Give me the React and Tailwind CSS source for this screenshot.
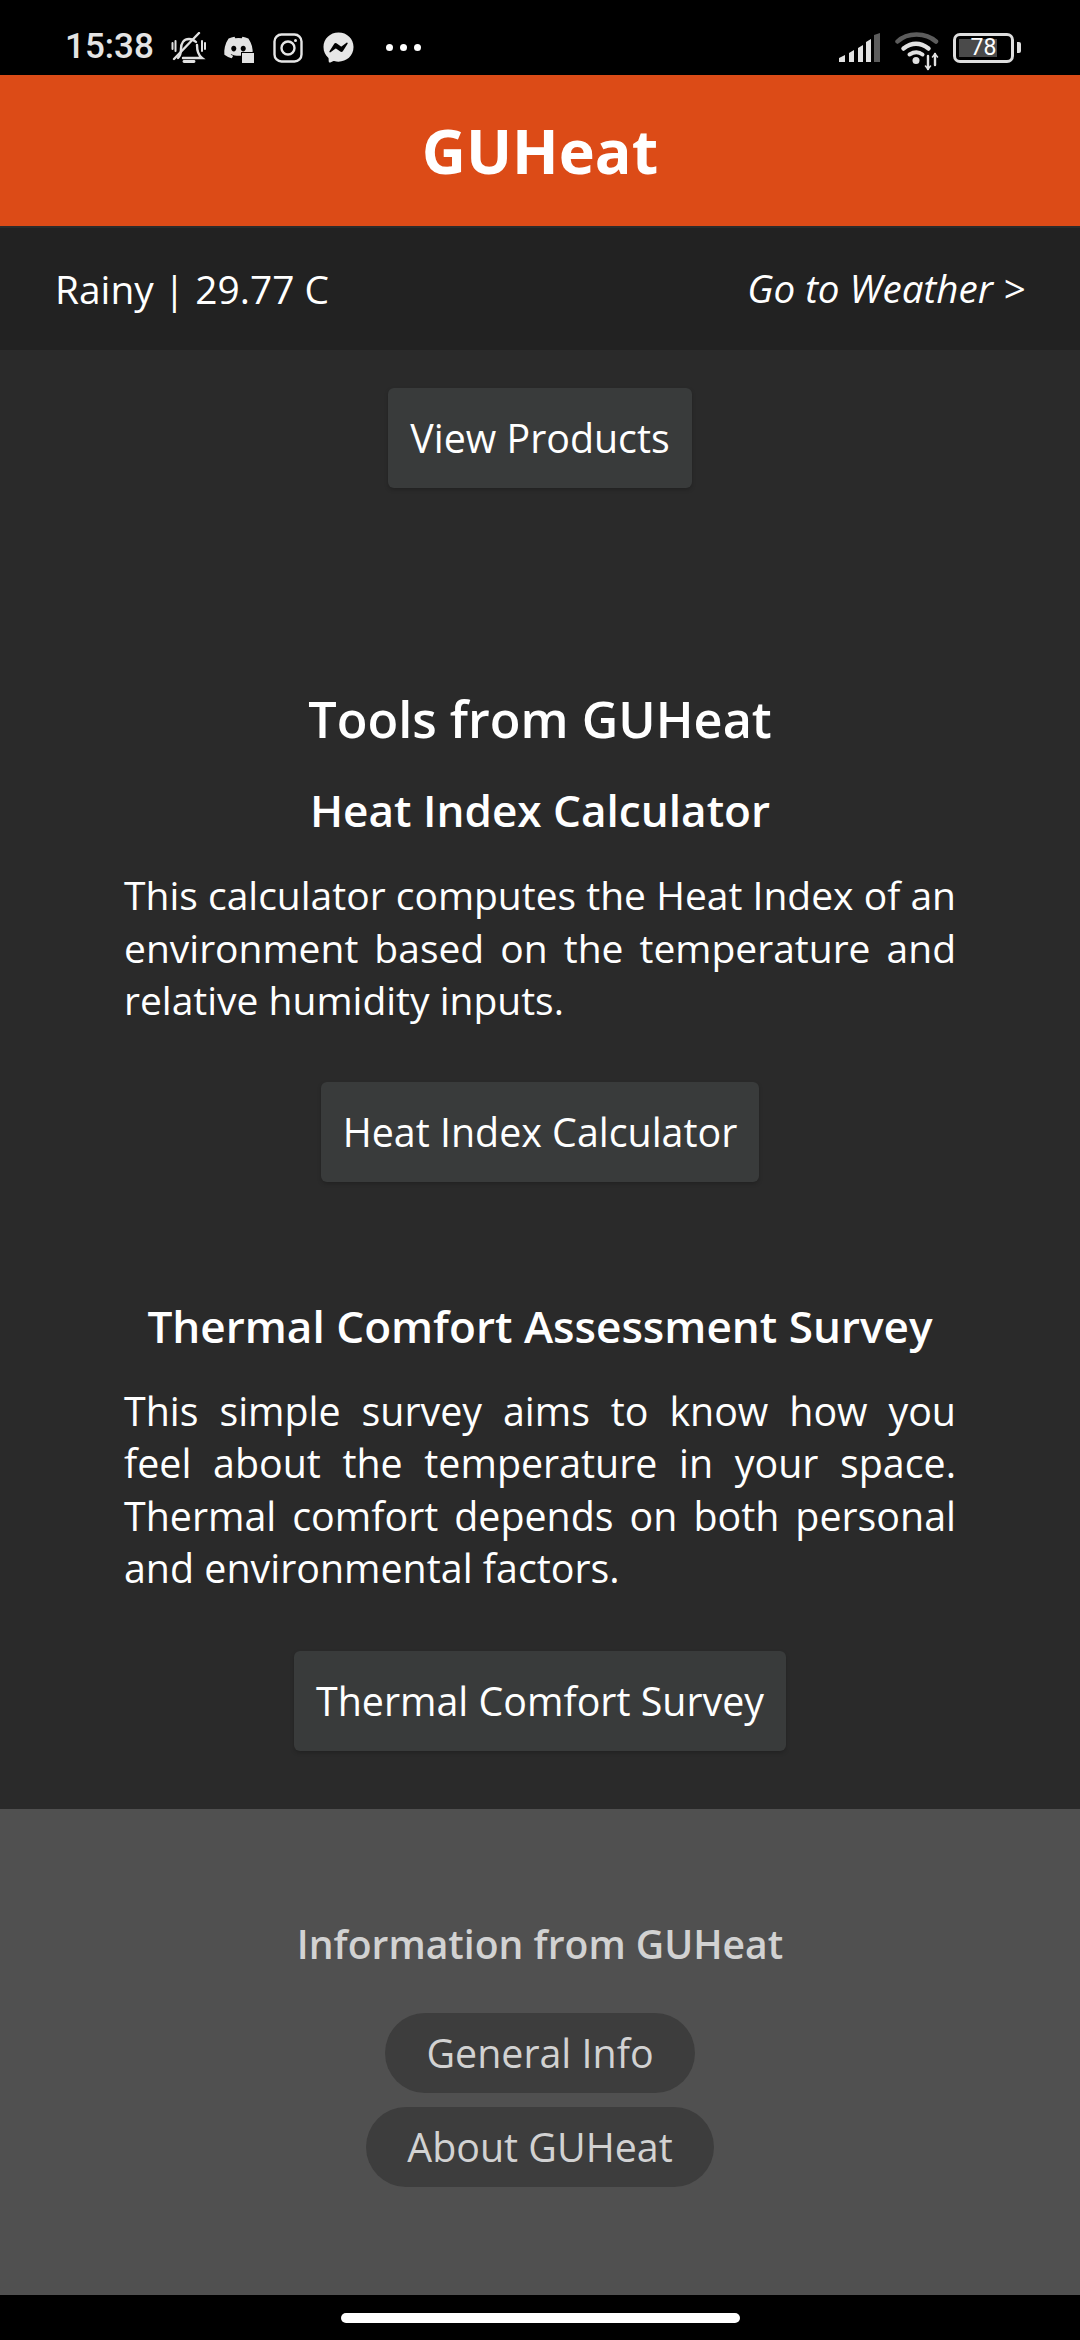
import React from 'react';
import { FaDiscord, FaFacebookMessenger } from 'react-icons/fa';

function BellOff() {
  return (
    <svg width="35" height="32" viewBox="0 0 35 32" fill="none" stroke="#e2e2e2" strokeWidth="2.400" strokeLinecap="round">
      <path d="M7 26c2-2 3-4 3-9 0-6 3-10 8-10 3 0 5 1 7 3" />
      <path d="M26 13c0 6 1 10 5 13H12" />
      <path d="M13 29.500h10" strokeWidth="2.800" />
      <path d="M28 1 3 27" />
      <path d="M1.500 11v6M4.500 9v10M31 9v10M34 11v6" strokeWidth="2" />
    </svg>
  );
}

function Signal() {
  return (
    <svg width="41" height="30" viewBox="0 0 41 30">
      <path d="M0 25l6-3v7H0zM10 20l5-3v12h-5zM19 15l5-3v17h-5zM27 9l5-3v23h-5z" fill="#e2e2e2" />
      <path d="M35 2l6-2v29h-6z" fill="#5c5c5c" />
    </svg>
  );
}

function Wifi() {
  return (
    <svg width="44" height="40" viewBox="0 0 44 40" fill="none" strokeLinecap="round">
      <path d="M2.500 9.500C12 0 31 0 41 9.500" stroke="#5c5c5c" strokeWidth="4.500" />
      <path d="M8.500 16.500c8-6 17-6 25 0" stroke="#e2e2e2" strokeWidth="4.500" />
      <path d="M14.500 22.500c5-3 9-3 13 0" stroke="#e2e2e2" strokeWidth="4" />
      <circle cx="21" cy="28.500" r="3.500" fill="#e2e2e2" />
      <path d="M33 24v13M40 22v11" stroke="#e2e2e2" strokeWidth="2.400" />
      <path d="M30.500 34l2.500 3 2.500-3M37.500 25l2.500-3 2.500 3" stroke="#e2e2e2" strokeWidth="1.600" />
    </svg>
  );
}

function StatusBar() {
  return (
    <div className="h-[75px] bg-black flex items-center justify-between pl-[65px] pr-[59px] pt-[20px]">
      <div className="flex items-center">
        <span className="w-[106px] text-[35px] font-medium text-[#e4e4e4] font-['Roboto',sans-serif]">15:38</span>
        <BellOff />
        <div className="relative ml-[17px] w-[31px] h-[30px] flex items-center">
          <FaDiscord size={31} color="#e2e2e2" />
          <div className="absolute right-[-1px] bottom-[-1px] w-[14px] h-[12px] bg-[#e2e2e2] border border-black" />
        </div>
        <svg className="ml-[19px]" width="30" height="30" viewBox="0 0 30 30" fill="none" stroke="#e6e6e6" strokeWidth="2.400">
          <rect x="1.500" y="1.500" width="27" height="27" rx="7" />
          <circle cx="15" cy="15" r="6.500" />
          <circle cx="22.500" cy="7.500" r="1.500" fill="#e6e6e6" stroke="none" />
        </svg>
        <div className="ml-[20px]"><FaFacebookMessenger size={31} color="#e6e6e6" /></div>
        <div className="ml-[32px] flex gap-[7px]">
          <span className="w-[7px] h-[7px] rounded-full bg-white" />
          <span className="w-[7px] h-[7px] rounded-full bg-white" />
          <span className="w-[7px] h-[7px] rounded-full bg-white" />
        </div>
      </div>
      <div className="flex items-center">
        <Signal />
        <div className="ml-[15px] mt-[8px]"><Wifi /></div>
        <div className="ml-[14px] flex items-center">
          <div className="w-[61px] h-[30px] rounded-[7px] border-[3px] border-[#dedede] p-[3px]">
            <div className="relative w-full h-full flex items-center justify-center">
              <div className="absolute inset-y-0 left-0 w-[78%] bg-[#4a4a4a]" />
              <span className="relative text-[23px] leading-none text-white font-['Roboto',sans-serif]">78</span>
            </div>
          </div>
          <div className="ml-[3px] w-[4px] h-[11px] rounded-r-[2px] bg-[#dedede]" />
        </div>
      </div>
    </div>
  );
}

function ToolButton({ children, className = '' }) {
  return (
    <div className={"h-[100px] px-[22px] pt-[2px] flex items-center bg-[#393b3b] rounded-[6px] shadow-[0_2px_4px_rgba(0,0,0,0.2)] text-[39.375px] text-white " + className}>
      {children}
    </div>
  );
}

export default function App() {
  return (
    <div className="w-[1080px] h-[2340px] flex flex-col bg-black font-['Open_Sans',sans-serif] overflow-hidden">
      <StatusBar />
      <div className="h-[151px] bg-[#dc4b17] flex items-center justify-center text-[61px] font-bold text-white">GUHeat</div>
      <div className="h-[124px] bg-[#222222] flex items-center justify-between px-[55px] text-white border-t-2 border-[#2b2b2b]">
        <span className="text-[38.900px]">Rainy | 29.77 C</span>
        <span className="text-[38.600px] italic">Go to Weather &gt;</span>
      </div>
      <main className="h-[1459px] bg-[#2a2a2a] flex flex-col items-center pt-[38px]">
        <ToolButton>View Products</ToolButton>
        <h2 className="mt-[199px] text-[50.400px] leading-[64px] font-semibold text-white">Tools from GUHeat</h2>
        <h3 className="mt-[31px] text-[44.100px] leading-[56px] font-semibold text-white">Heat Index Calculator</h3>
        <p className="mt-[31px] w-[832px] text-[39px] leading-[52.500px] text-white text-justify">
          This calculator computes the Heat Index of an environment based on the temperature and relative humidity inputs.
        </p>
        <ToolButton className="mt-[55px]">Heat Index Calculator</ToolButton>
        <h3 className="mt-[116px] text-[44.100px] leading-[56px] font-semibold text-white">Thermal Comfort Assessment Survey</h3>
        <p className="mt-[31px] w-[832px] text-[39.375px] leading-[52.500px] text-white text-justify">
          This simple survey aims to know how you feel about the temperature in your space. Thermal comfort depends on both personal and environmental factors.
        </p>
        <ToolButton className="mt-[56px]">Thermal Comfort Survey</ToolButton>
      </main>
      <footer className="h-[486px] bg-[#505050] flex flex-col items-center pt-[110px]">
        <h4 className="text-[39.100px] leading-[50px] font-semibold text-[#d2d2d2]">Information from GUHeat</h4>
        <div className="mt-[44px] h-[80px] px-[41px] pt-[2px] flex items-center rounded-full bg-[#3d3d3d] text-[39.375px] text-[#d2d2d2]">General Info</div>
        <div className="mt-[14px] h-[80px] px-[41px] pt-[2px] flex items-center rounded-full bg-[#3d3d3d] text-[39.375px] text-[#d2d2d2]">About GUHeat</div>
      </footer>
      <div className="flex-1 flex justify-center pt-[18px]">
        <div className="w-[399px] h-[10px] rounded-full bg-white" />
      </div>
    </div>
  );
}
